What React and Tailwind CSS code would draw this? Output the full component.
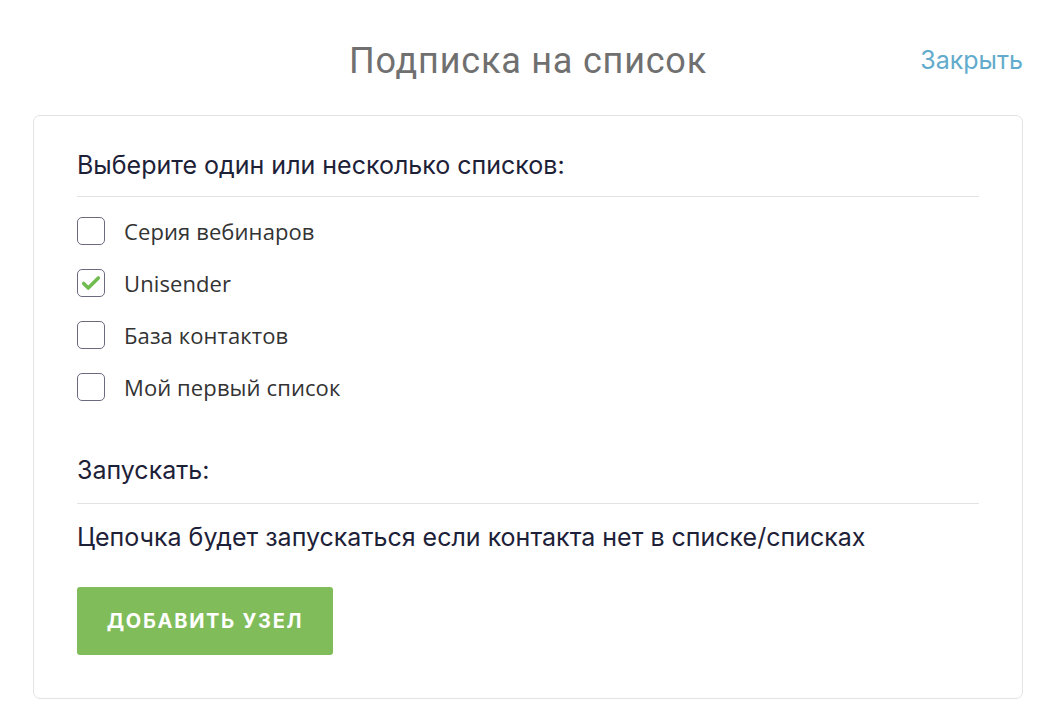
import { useState } from "react";

const lists = [
    { id: 1, name: "Серия вебинаров", checked: false },
    { id: 2, name: "Unisender", checked: true },
    { id: 3, name: "База контактов", checked: false },
    { id: 4, name: "Мой первый список", checked: false },
];

function CheckRow({ item, onToggle }) {
    return (
        <label className="flex items-center h-[52px] cursor-pointer" onClick={() => onToggle(item.id)}>
            <span className="w-[28px] h-[28px] rounded-[5px] border border-[#6b6b80] bg-white flex items-center justify-center shrink-0">
                {item.checked && (
                    <svg viewBox="0 0 24 24" className="w-[22px] h-[22px]" fill="none" stroke="#6fbb4f" strokeWidth={3.8} strokeLinecap="round" strokeLinejoin="round">
                        <path d="M4 12.5l5 5L20 6.5" />
                    </svg>
                )}
            </span>
            <span className="ml-[19px] text-[22px] text-[#333333] font-['Open_Sans',sans-serif] tracking-[0.1px]">{item.name}</span>
        </label>
    );
}

export default function App() {
    const [items, setItems] = useState(lists);

    const toggle = (id) => {
        setItems(items.map((i) => (i.id === id ? { ...i, checked: !i.checked } : i)));
    };

    return (
        <div className="w-[1056px] h-[728px] bg-white px-[33px] font-['Inter',sans-serif]">
            <div className="relative flex items-center justify-center h-[115px] pt-[6px]">
                <h1 className="text-[36px] text-[#707070] font-['Roboto',sans-serif] font-normal tracking-[0.8px]">Подписка на список</h1>
                <button className="absolute right-0 top-[42px] text-[25px] text-[#62abcc]">Закрыть</button>
            </div>
            <div className="border border-[#e3e3e3] rounded-[7px] h-[584px] px-[43px] pt-[31px]">
                <p className="text-[25px] text-[#1d2138] leading-[36px]">Выберите один или несколько списков:</p>
                <div className="border-t border-[#e3e3e3] mt-[13px] pt-[8px]">
                    {items.map((item) => (
                        <CheckRow key={item.id} item={item} onToggle={toggle} />
                    ))}
                </div>
                <p className="text-[25px] text-[#1d2138] leading-[36px] mt-[39px]">Запускать:</p>
                <div className="border-t border-[#e3e3e3] mt-[15px] pt-[15px]">
                    <p className="text-[25px] text-[#1d2138] leading-[36px]">Цепочка будет запускаться если контакта нет в списке/списках</p>
                </div>
                <button className="mt-[32px] w-[256px] h-[68px] rounded-[3px] bg-[#80bd5a] text-white text-[20px] font-bold uppercase tracking-[1.7px]">
                    Добавить узел
                </button>
            </div>
        </div>
    );
}
